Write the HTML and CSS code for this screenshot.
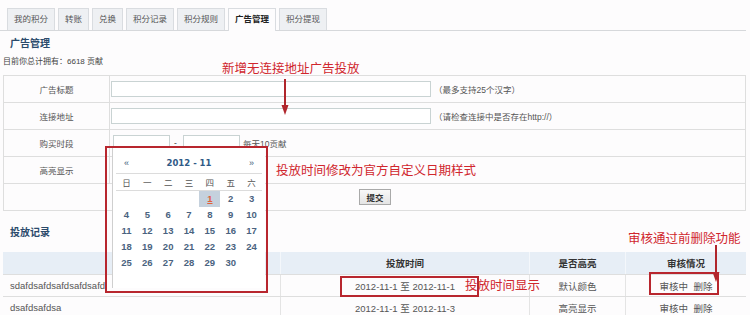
FILE: index.html
```html
<!DOCTYPE html>
<html lang="zh-CN">
<head>
    <meta charset="UTF-8">
    <meta name="viewport" content="width=device-width, initial-scale=1.0">
    <title>广告管理</title>
    <link rel="stylesheet" href="styles.css">
</head>
<body>
    <div class="page">
        <ul class="tabs">
            <li>我的积分</li>
            <li>转账</li>
            <li>兑换</li>
            <li>积分记录</li>
            <li>积分规则</li>
            <li class="active">广告管理</li>
            <li>积分提现</li>
        </ul>

        <h2 class="section-title">广告管理</h2>
        <p class="summary">目前你总计拥有：6618 贡献</p>

        <table class="ad-form">
            <tr>
                <th>广告标题</th>
                <td><input type="text" class="wide-input"><span class="hint">（最多支持25个汉字）</span></td>
            </tr>
            <tr>
                <th>连接地址</th>
                <td><input type="text" class="wide-input"><span class="hint">（请检查连接中是否存在http://）</span></td>
            </tr>
            <tr>
                <th>购买时段</th>
                <td>
                    <input type="text" class="date-input"><span class="dash">-</span><input type="text" class="date-input"><span class="note">每天10贡献</span>
                </td>
            </tr>
            <tr>
                <th>高亮显示</th>
                <td></td>
            </tr>
            <tr>
                <td colspan="2" class="submit-cell"><button class="submit-btn">提交</button></td>
            </tr>
        </table>

        <h2 class="section-title records-title">投放记录</h2>

        <table class="records">
            <tr>
                <th class="col-title"></th>
                <th class="col-time">投放时间</th>
                <th class="col-light">是否高亮</th>
                <th class="col-status">审核情况</th>
            </tr>
            <tr>
                <td class="col-title">sdafdsafdsafdsafdsafd</td>
                <td>2012-11-1 至 2012-11-1</td>
                <td>默认颜色</td>
                <td>审核中&nbsp;&nbsp;删除</td>
            </tr>
            <tr>
                <td class="col-title">dsafdsafdsa</td>
                <td>2012-11-1 至 2012-11-3</td>
                <td>高亮显示</td>
                <td>审核中&nbsp;&nbsp;删除</td>
            </tr>
        </table>

        <!-- date picker popup under the first date input -->
        <div class="calendar">
            <div class="cal-head">
                <span>«</span>
                <span class="cal-month">2012 - 11</span>
                <span>»</span>
            </div>
            <div class="cal-week">
                <span>日</span><span>一</span><span>二</span><span>三</span><span>四</span><span>五</span><span>六</span>
            </div>
            <div class="cal-days" id="calDays"></div>
        </div>

        <!-- red annotations -->
        <div class="note-text note-top">新增无连接地址广告投放</div>
        <svg class="arrow arrow-top" width="10" height="40" viewBox="0 0 10 40">
            <line x1="5" y1="2" x2="5" y2="32" stroke="#b0262c" stroke-width="2"/>
            <polygon points="1.5,28 8.5,28 5,38" fill="#b0262c"/>
        </svg>
        <div class="mark mark-calendar"></div>
        <div class="note-text note-calendar">投放时间修改为官方自定义日期样式</div>
        <div class="mark mark-time"></div>
        <div class="note-text note-time">投放时间显示</div>
        <div class="note-text note-delete">审核通过前删除功能</div>
        <svg class="arrow arrow-delete" width="10" height="40" viewBox="0 0 10 40">
            <line x1="5" y1="0" x2="5" y2="30" stroke="#b0262c" stroke-width="2"/>
            <polygon points="1.5,27 8.5,27 5,37" fill="#b0262c"/>
        </svg>
        <div class="mark mark-status"></div>
    </div>

    <script>
        const calDays = document.getElementById('calDays');
        // November 2012 starts on a Thursday
        const offset = 4;
        for (let i = 0; i < offset; i++) {
            calDays.appendChild(document.createElement('span'));
        }
        for (let d = 1; d <= 30; d++) {
            const cell = document.createElement('span');
            cell.textContent = d;
            if (d === 1) cell.className = 'today';
            calDays.appendChild(cell);
        }
    </script>
</body>
</html>
```

FILE: styles.css
```css
body {
    margin: 0;
    background: #fdfcfd;
    font-family: 'Liberation Sans', 'Noto Sans CJK SC', sans-serif;
    color: #444;
}

.page {
    position: relative;
    width: 750px;
    height: 315px;
    overflow: hidden;
}

.tabs {
    display: flex;
    gap: 3px;
    list-style: none;
    margin: 0 4px 0 0;
    padding: 8px 0 0 7px;
    border-bottom: 1px solid #d6d8db;
}

.tabs li {
    height: 21px;
    line-height: 21px;
    padding: 0 6px;
    font-size: 8.5px;
    color: #555;
    background: #eef0f3;
    border: 1px solid #d9dce0;
    border-bottom: none;
}

.tabs li.active {
    background: #fdfcfd;
    color: #222;
    font-weight: bold;
    margin-bottom: -1px;
    height: 22px;
}

.section-title {
    margin: 6px 0 0 10px;
    font-size: 10px;
    line-height: 14px;
    color: #2b4a6b;
}

.summary {
    margin: 4px 0 0 3px;
    font-size: 8px;
    line-height: 14px;
    color: #444;
}

.ad-form {
    margin: 6px 0 0 3px;
    width: 743px;
    border-collapse: collapse;
}

.ad-form th,
.ad-form td {
    height: 26px;
    padding: 0;
    border: 1px solid #dedede;
    font-size: 8.5px;
}

.ad-form th {
    width: 105px;
    font-weight: normal;
    color: #555;
}

.ad-form td {
    padding-left: 1px;
}

input[type="text"] {
    box-sizing: border-box;
    height: 16px;
    margin: 0;
    padding: 0 2px;
    border: 1px solid #c9d3d3;
    background: #fff;
    vertical-align: middle;
}

.wide-input {
    width: 320px;
}

.date-input {
    width: 57px;
    margin-left: 2px !important;
}

.hint,
.note {
    margin-left: 3px;
    color: #555;
    vertical-align: middle;
}

.dash {
    display: inline-block;
    width: 11px;
    text-align: center;
    vertical-align: middle;
}

.submit-cell {
    text-align: center;
}

.submit-btn {
    width: 32px;
    height: 16px;
    padding: 0;
    font-family: 'Noto Sans CJK SC', sans-serif;
    font-size: 8.5px;
    font-weight: bold;
    color: #333;
    background: linear-gradient(#f8f8f8, #e4e4e4);
    border: 1px solid #a9a9a9;
}

.records-title {
    margin-top: 15px;
}

.records {
    margin: 12px 0 0 3px;
    width: 743px;
    border-collapse: collapse;
    font-size: 9.5px;
}

.records th,
.records td {
    height: 21px;
    padding: 0;
    text-align: center;
    border-bottom: 1px solid #dedede;
    border-left: 1px solid #e4e4e4;
    color: #555;
}

.records th {
    height: 22px;
    background: #e7eef6;
    color: #333;
    border-left-color: #f4f7fb;
}

.records .col-title {
    width: 270px;
    text-align: left;
    padding-left: 7px;
    border-left: none;
}

.col-time {
    width: 248px;
}

.col-light {
    width: 95px;
}

/* date picker */
.calendar {
    position: absolute;
    left: 112px;
    top: 147px;
    width: 146px;
    padding: 6px 3px 17px;
    background: #fff;
    border-left: 1px solid #cfcfcf;
    font-family: 'Liberation Sans', sans-serif;
}

.cal-head {
    display: grid;
    grid-template-columns: 1fr 5fr 1fr;
    height: 20px;
    line-height: 20px;
    text-align: center;
    border-bottom: 1px solid #dcdcdc;
    font-size: 9px;
    color: #3e5b79;
}

.cal-month {
    font-family: 'DejaVu Sans', sans-serif;
    font-size: 8.5px;
    font-weight: bold;
    color: #2f5a86;
}

.cal-week {
    display: grid;
    grid-template-columns: repeat(7, 1fr);
    height: 16px;
    line-height: 16px;
    text-align: center;
    border-bottom: 1px solid #dcdcdc;
    font-family: 'Noto Sans CJK SC', sans-serif;
    font-size: 8.5px;
    color: #555;
}

.cal-days {
    display: grid;
    grid-template-columns: repeat(7, 1fr);
    grid-auto-rows: 16px;
    line-height: 16px;
    text-align: center;
    font-size: 9.5px;
    font-weight: bold;
    color: #4a6380;
}

.cal-days .today {
    background: #c5d1dd;
    color: #e0603a;
    text-decoration: underline;
}

/* annotations */
.note-text {
    position: absolute;
    font-family: 'Noto Sans CJK SC', sans-serif;
    font-size: 12.5px;
    line-height: 16px;
    color: #d0262d;
    white-space: nowrap;
}

.note-top {
    left: 222px;
    top: 60px;
}

.note-calendar {
    left: 276px;
    top: 162px;
}

.note-time {
    left: 465px;
    top: 277px;
}

.note-delete {
    left: 628px;
    top: 230px;
}

.arrow {
    position: absolute;
}

.arrow-top {
    left: 280px;
    top: 77px;
}

.arrow-delete {
    left: 711px;
    top: 245px;
}

.mark {
    position: absolute;
    box-sizing: border-box;
    border: 2px solid #b8262e;
}

.mark-calendar {
    left: 105px;
    top: 146px;
    width: 163px;
    height: 147px;
}

.mark-time {
    left: 340px;
    top: 276px;
    width: 139px;
    height: 21px;
}

.mark-status {
    left: 649px;
    top: 272px;
    width: 70px;
    height: 23px;
}
```
